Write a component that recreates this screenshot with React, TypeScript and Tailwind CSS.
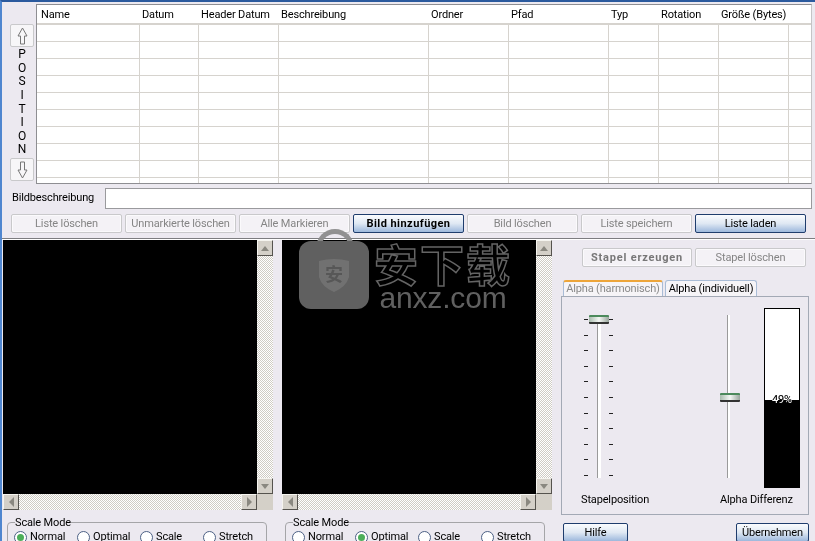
import React from 'react'

const cols = [103, 59, 80, 150, 80, 100, 50, 60, 70, 22]
const heads = ['Name', 'Datum', 'Header Datum', 'Beschreibung', 'Ordner', 'Pfad', 'Typ', 'Rotation', 'Größe (Bytes)', '']
const rows = [0, 1, 2, 3, 4, 5, 6, 7, 8, 9]
const ticks = [0, 1, 2, 3, 4, 5, 6, 7, 8, 9, 10]

function Btn({ label, w = 'w-[111px]', kind = 'off' }: { label: string; w?: string; kind?: 'off' | 'bold' | 'on' | 'strong' }) {
  const cls = {
    off: 'border-[#c9c9cb] bg-[#f4f2f6] text-[#858585] shadow-[inset_0_0_0_1px_#fbfafc]',
    bold: 'border-[#c9c9cb] bg-[#f4f2f6] text-[#777] font-bold tracking-[0.8px] shadow-[inset_0_0_0_1px_#fbfafc]',
    on: 'border-[#1f3d6d] bg-gradient-to-b from-[#fbfcfe] via-[#dfe8f3] to-[#9db8dc] text-black',
    strong: 'border-[#1f3d6d] bg-gradient-to-b from-[#fbfcfe] via-[#dfe8f3] to-[#9db8dc] text-black font-bold tracking-[0.45px]',
  }[kind]
  return (
    <button className={`${w} h-[19px] shrink-0 whitespace-nowrap rounded-[2px] border text-center leading-[16px] ${cls}`}>{label}</button>
  )
}

function Arrow({ up }: { up?: boolean }) {
  return (
    <button className="flex h-[23px] w-[24px] items-center justify-center rounded-[2px] border border-[#c9c9cb] bg-[#f7f6f8]">
      <svg width="11" height="18" viewBox="0 0 11 18" className={up ? '' : 'rotate-180'}>
        <path d="M5.5 1 L10 9 H7.5 V17 H3.5 V9 H1 Z" fill="#f7f6f8" stroke="#777" strokeWidth="1" />
      </svg>
    </button>
  )
}

function ScrollBtn({ dir }: { dir: 'up' | 'down' | 'left' | 'right' }) {
  const pts = { up: '1,6 9,6 5,1', down: '1,1 9,1 5,6', left: '6,0 6,10 1,5', right: '1,0 1,10 6,5' }[dir]
  return (
    <div className="flex h-[16px] w-[16px] shrink-0 items-center justify-center border-t border-l border-t-[#f5f4ef] border-l-[#f5f4ef] border-r border-b border-r-[#55534e] border-b-[#55534e] bg-[#d4d0c8]">
      <svg width="10" height="10" viewBox="0 0 10 10">
        <polygon points={pts} fill="#8a8880" transform={dir === 'up' || dir === 'down' ? 'translate(0 2)' : 'translate(2 0)'} />
      </svg>
    </div>
  )
}

const dither = 'bg-[repeating-conic-gradient(#cfccc4_0_25%,#ffffff_0_50%)] bg-[length:2px_2px]'

function View({ children }: { children?: React.ReactNode }) {
  return (
    <div className="relative w-[270px] shrink-0">
      <div className="flex h-[254px]">
        <div className="w-[254px] bg-black" />
        <div className={`flex w-[16px] flex-col justify-between ${dither}`}>
          <ScrollBtn dir="up" />
          <ScrollBtn dir="down" />
        </div>
      </div>
      <div className="flex h-[16px]">
        <div className={`flex w-[254px] justify-between ${dither}`}>
          <ScrollBtn dir="left" />
          <ScrollBtn dir="right" />
        </div>
        <div className="w-[16px] bg-[#d4d0c8]" />
      </div>
      {children}
    </div>
  )
}

function Radio({ label, on }: { label: string; on?: boolean }) {
  return (
    <div className="flex w-[63px] shrink-0 items-center gap-[3px]">
      <span className="flex h-[13px] w-[13px] shrink-0 items-center justify-center rounded-full border border-[#4d6185] bg-white">
        {on && <span className="h-[7px] w-[7px] rounded-full bg-[#4cae5a]" />}
      </span>
      <span>{label}</span>
    </div>
  )
}

function ScaleMode({ sel }: { sel: string }) {
  return (
    <fieldset className="h-[60px] w-[259px] rounded-[4px] border border-[#a5a5a8] pl-[6px]">
      <legend className="ml-[1px] px-0 leading-[13px]">Scale Mode</legend>
      <div className="flex">
        {['Normal', 'Optimal', 'Scale', 'Stretch'].map((l) => (
          <Radio key={l} label={l} on={l === sel} />
        ))}
      </div>
    </fieldset>
  )
}

function Thumb({ className }: { className: string }) {
  return (
    <div className={`absolute h-[9px] w-[20px] rounded-[1px] border-b-2 border-b-[#333] border-t-2 border-t-[#4c8a5c] bg-gradient-to-r from-[#a9bcae] via-[#f4f7f4] to-[#98a59c] ${className}`} />
  )
}

function Watermark() {
  return (
    <div className="pointer-events-none absolute left-[17px] top-[-11px] flex opacity-95">
      <div className="relative h-[80px] w-[70px]">
        <div className="absolute left-[17px] top-0 h-[22px] w-[38px] rounded-t-[20px] border-[5px] border-b-0 border-[#8d8d8d]" />
        <div className="absolute bottom-0 left-0 flex h-[68px] w-[70px] items-center justify-center rounded-[12px] bg-[#666]">
          <svg width="32" height="36" viewBox="0 0 32 36">
            <path d="M1 4 Q16 0 31 4 V20 Q28 30 16 35 Q4 30 1 20 Z" fill="#787878" />
            <text x="16" y="24" textAnchor="middle" fontSize="18" fill="#5c5c5c" fontFamily="'Noto Sans CJK SC', sans-serif" fontWeight="700">安</text>
          </svg>
        </div>
      </div>
      <div className="ml-[4px] mt-[11px] flex w-[140px] flex-col items-center">
        <div className="h-[46px] font-['Noto_Sans_CJK_SC',sans-serif] text-[44px] font-bold leading-[46px] tracking-[2px] text-transparent [-webkit-text-stroke:1.5px_#6a6a6a]">安下载</div>
        <div className="font-['Liberation_Sans',sans-serif] text-[30px] leading-[24px] text-[#666]">anxz.com</div>
      </div>
    </div>
  )
}

export default function App() {
  return (
    <div className="h-[541px] w-[815px] overflow-hidden border-l-[2px] border-t-[2px] border-l-[#4f86cf] border-t-[#2b5a9e] bg-[#ece9f0] font-['Roboto',sans-serif] text-[11px] tracking-[-0.15px] text-black">
      {/* upper part: file list */}
      <div className="h-[237px] border-b border-b-[#7d7d80] shadow-[0_1px_0_#fff]">
        <div className="flex pt-[2px]">
          <div className="flex w-[34px] shrink-0 flex-col items-start pl-[8px] pt-[20px]">
            <Arrow up />
            <div className="flex h-[111px] w-[24px] flex-col items-center justify-center text-[12px] leading-[13.6px]">
              {'POSITION'.split('').map((c, i) => (
                <span key={i}>{c}</span>
              ))}
            </div>
            <Arrow />
          </div>
          <div className="h-[180px] w-[776px] overflow-hidden border border-t-[#8e8e92] border-l-[#8e8e92] border-r-[#c4c4c6] border-b-[#8e8e92] bg-white">
            <div className="flex h-[20px] border-b-[2px] border-b-[#d6d3ce]">
              {heads.map((h, i) => (
                <div key={i} style={{ width: cols[i] }} className="shrink-0 overflow-hidden whitespace-nowrap pl-[2px] leading-[19px] first:pl-[4px]">{h}</div>
              ))}
            </div>
            {rows.map((r) => (
              <div key={r} className="flex h-[17px] border-b border-b-[#d6d3ce]">
                {cols.map((c, i) => (
                  <div key={i} style={{ width: c }} className="shrink-0 border-r border-r-[#d6d3ce] last:border-r-0" />
                ))}
              </div>
            ))}
          </div>
        </div>
        <div className="mt-[4px] flex items-center pl-[10px]">
          <span className="w-[93px] shrink-0">Bildbeschreibung</span>
          <div className="h-[21px] w-[707px] border border-[#9a9a9d] bg-white" />
        </div>
        <div className="mt-[5px] flex gap-[3px] pl-[9px]">
          <Btn label="Liste löschen" />
          <Btn label="Unmarkierte löschen" />
          <Btn label="Alle Markieren" />
          <Btn label="Bild hinzufügen" kind="strong" />
          <Btn label="Bild löschen" />
          <Btn label="Liste speichern" />
          <Btn label="Liste laden" kind="on" />
        </div>
      </div>

      {/* lower part: previews and stack controls */}
      <div className="flex pl-[1px] pt-[1px]">
        <div className="w-[279px] shrink-0">
          <View />
          <div className="ml-[4px] mt-[6px]">
            <ScaleMode sel="Normal" />
          </div>
        </div>
        <div className="w-[279px] shrink-0">
          <View>
            <Watermark />
          </View>
          <div className="ml-[3px] mt-[6px]">
            <ScaleMode sel="Optimal" />
          </div>
        </div>
        <div className="flex w-[251px] shrink-0 flex-col pt-[8px]">
          <div className="flex gap-[3px] pl-[21px]">
            <Btn label="Stapel erzeugen" w="w-[110px]" kind="bold" />
            <Btn label="Stapel löschen" />
          </div>
          <div className="mt-[13px] flex gap-[2px] pl-[2px]">
            <div className="h-[16px] w-[100px] whitespace-nowrap rounded-t-[3px] border border-b-0 border-[#a9bcd6] border-t-[2px] border-t-[#eda53a] bg-[#f6f4f7] text-center leading-[14px] text-[#8a8a8a]">Alpha (harmonisch)</div>
            <div className="h-[16px] w-[92px] whitespace-nowrap rounded-t-[3px] border border-b-0 border-[#a9bcd6] bg-[#f6f4f7] text-center leading-[15px]">Alpha (individuell)</div>
          </div>
          <div className="flex h-[219px] w-[248px] flex-col border border-[#a3a9b5] pt-[11px]">
            <div className="flex h-[180px]">
              <div className="relative ml-[22px] mt-[7px] flex h-[163px] w-[29px] shrink-0 justify-between">
                <div className="flex flex-col justify-between pb-[2px] pt-[4px]">
                  {ticks.map((t) => <div key={t} className="h-[1px] w-[4px] bg-[#222]" />)}
                </div>
                <div className="mt-[4px] h-[159px] w-[4px] border-l border-l-[#9a9a9a] bg-white" />
                <div className="flex flex-col justify-between pb-[2px] pt-[4px]">
                  {ticks.map((t) => <div key={t} className="h-[1px] w-[4px] bg-[#222]" />)}
                </div>
                <Thumb className="left-[5px] top-0" />
              </div>
              <div className="relative ml-[114px] mt-[7px] h-[163px] w-[3px] shrink-0 border-l border-l-[#9a9a9a] bg-white">
                <Thumb className="left-[-8px] top-[78px]" />
              </div>
              <div className="relative ml-[34px] flex h-[180px] w-[36px] shrink-0 flex-col border border-black bg-white">
                <div className="h-[91px]" />
                <div className="flex-1 bg-black" />
                <span className="absolute left-0 right-0 top-[84px] text-center leading-[13px] text-white mix-blend-difference">49%</span>
              </div>
            </div>
            <div className="mt-[4px] flex pl-[19px]">
              <span className="w-[139px] shrink-0 whitespace-nowrap">Stapelposition</span>
              <span className="whitespace-nowrap">Alpha Differenz</span>
            </div>
          </div>
          <div className="mt-[8px] flex justify-between pl-[2px] pr-[3px]">
            <Btn label="Hilfe" w="w-[65px]" kind="on" />
            <Btn label="Übernehmen" w="w-[73px]" kind="on" />
          </div>
        </div>
      </div>
    </div>
  )
}
